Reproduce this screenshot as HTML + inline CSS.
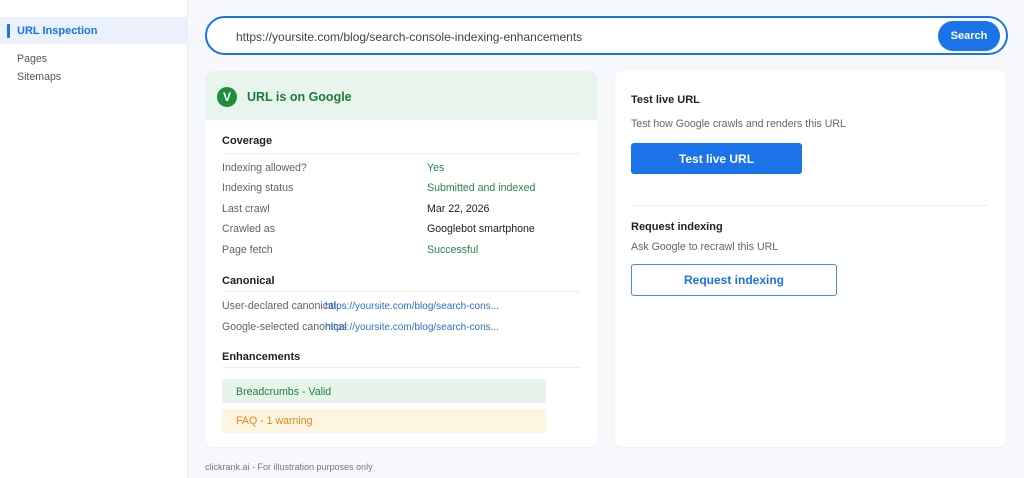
<!DOCTYPE html>
<html><head><meta charset="utf-8"><style>
*{margin:0;padding:0;box-sizing:border-box}
body{width:1024px;height:478px;background:#f6f8fb;font-family:"Liberation Sans",Arial,sans-serif;position:relative;overflow:hidden;color:#202124}
.a{position:absolute;white-space:nowrap}
.side{position:absolute;left:0;top:0;width:188px;height:478px;background:#fff;border-right:1px solid #e6e9ee}
.card{position:absolute;background:#fff;border-radius:8px;box-shadow:0 1px 2px rgba(0,0,0,.04)}
.h{font-weight:bold;font-size:11px;color:#222}
.l{font-size:10.6px;color:#5f6368}
.g{color:#26864a}
.line{position:absolute;height:1px;background:#eceef1}
</style></head><body>
<div class="side"></div>
<div class="a" style="left:0;top:17px;width:188px;height:27px;background:#eaf1fd"></div>
<div class="a" style="left:7px;top:24px;width:3px;height:14px;background:#1a73e8;border-radius:1px"></div>
<div class="a" style="left:17px;top:25px;font-size:11px;font-weight:bold;color:#1a73e8">URL Inspection</div>
<div class="a l" style="left:17px;top:53px;color:#555">Pages</div>
<div class="a l" style="left:17px;top:71px;color:#555">Sitemaps</div>

<div class="a" style="left:205px;top:16px;width:803px;height:39px;border:2px solid #1a73e8;border-radius:20px;background:#fff"></div>
<div class="a" style="left:236px;top:30px;font-size:12px;color:#444">https://yoursite.com/blog/search-console-indexing-enhancements</div>
<div class="a" style="left:938px;top:21px;width:62px;height:30px;border-radius:15px;background:#1a73e8;color:#fff;font-size:11px;font-weight:bold;text-align:center;line-height:30px">Search</div>

<div class="card" style="left:205px;top:71px;width:392px;height:376px;overflow:hidden">
<div style="height:49px;background:#e8f5ec"></div>
</div>
<div class="a" style="left:217px;top:87px;width:20px;height:20px;border-radius:50%;background:#1e8e3e;color:#fff;font-size:12px;font-weight:bold;text-align:center;line-height:20px">V</div>
<div class="a" style="left:247px;top:90px;font-size:12.5px;font-weight:bold;color:#1e7a3c">URL is on Google</div>

<div class="a h" style="left:222px;top:135px">Coverage</div>
<div class="line" style="left:222px;top:153px;width:358px"></div>
<div class="a l" style="left:222px;top:162px">Indexing allowed?</div><div class="a l g" style="left:427px;top:162px">Yes</div>
<div class="a l" style="left:222px;top:182px">Indexing status</div><div class="a l g" style="left:427px;top:182px">Submitted and indexed</div>
<div class="a l" style="left:222px;top:203px">Last crawl</div><div class="a l" style="left:427px;top:203px;color:#222">Mar 22, 2026</div>
<div class="a l" style="left:222px;top:223px">Crawled as</div><div class="a l" style="left:427px;top:223px;color:#222">Googlebot smartphone</div>
<div class="a l" style="left:222px;top:244px">Page fetch</div><div class="a l g" style="left:427px;top:244px">Successful</div>

<div class="a h" style="left:222px;top:275px">Canonical</div>
<div class="line" style="left:222px;top:291px;width:358px"></div>
<div class="a l" style="left:222px;top:300px">User-declared canonical</div><div class="a" style="left:325px;top:301px;font-size:10px;color:#2a6fd6">https://yoursite.com/blog/search-cons...</div>
<div class="a l" style="left:222px;top:321px">Google-selected canonical</div><div class="a" style="left:325px;top:322px;font-size:10px;color:#2a6fd6">https://yoursite.com/blog/search-cons...</div>

<div class="a h" style="left:222px;top:351px">Enhancements</div>
<div class="line" style="left:222px;top:367px;width:358px"></div>
<div class="a" style="left:222px;top:379px;width:324px;height:24px;background:#e6f4ea;border-radius:2px"></div>
<div class="a l" style="left:236px;top:386px;color:#2a7a45">Breadcrumbs - Valid</div>
<div class="a" style="left:222px;top:409px;width:324px;height:24px;background:#fef5e1;border-radius:2px"></div>
<div class="a l" style="left:236px;top:415px;color:#e0861a">FAQ - 1 warning</div>

<div class="a" style="left:205px;top:462px;font-size:9px;color:#777">clickrank.ai - For illustration purposes only</div>

<div class="card" style="left:615px;top:71px;width:391px;height:376px"></div>
<div class="a h" style="left:631px;top:94px">Test live URL</div>
<div class="a l" style="left:631px;top:118px;color:#666">Test how Google crawls and renders this URL</div>
<div class="a" style="left:631px;top:143px;width:171px;height:31px;background:#1a73e8;border-radius:3px;color:#fff;font-size:12px;font-weight:bold;text-align:center;line-height:32px">Test live URL</div>
<div class="line" style="left:631px;top:205px;width:357px"></div>
<div class="a h" style="left:631px;top:221px">Request indexing</div>
<div class="a l" style="left:631px;top:241px;color:#666">Ask Google to recrawl this URL</div>
<div class="a" style="left:631px;top:264px;width:206px;height:32px;border:1px solid #4a8ae6;border-radius:3px;color:#1a73e8;font-size:12px;font-weight:bold;text-align:center;line-height:31px;background:#fff">Request indexing</div>
</body></html>
